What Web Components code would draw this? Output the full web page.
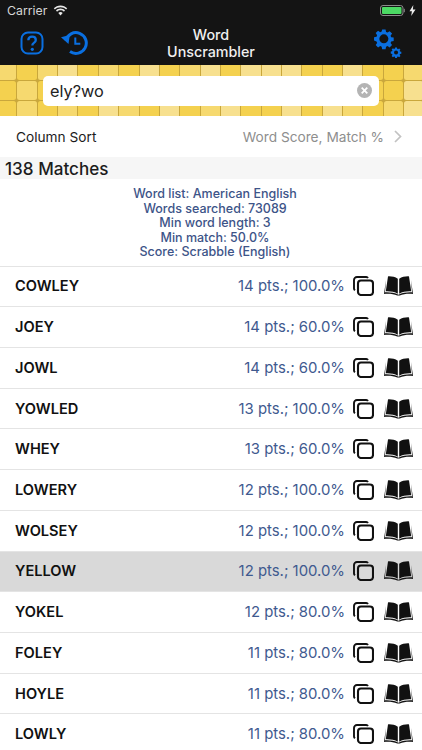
<!DOCTYPE html>
<html>
<head>
<meta charset="utf-8">
<style>
  html, body { margin: 0; padding: 0; background: #fff; }
  body { width: 422px; height: 750px; overflow: hidden; font-family: Inter, "Liberation Sans", sans-serif; }
</style>
</head>
<body>
<app-header></app-header>
<tile-search value="ely?wo"></tile-search>
<sort-row></sort-row>
<match-head>138 Matches</match-head>
<search-info>
  <div>Word list: American English</div>
  <div>Words searched: 73089</div>
  <div>Min word length: 3</div>
  <div>Min match: 50.0%</div>
  <div>Score: Scrabble (English)</div>
</search-info>
<word-row word="COWLEY" score="14 pts.; 100.0%"></word-row>
<word-row word="JOEY" score="14 pts.; 60.0%"></word-row>
<word-row word="JOWL" score="14 pts.; 60.0%"></word-row>
<word-row word="YOWLED" score="13 pts.; 100.0%"></word-row>
<word-row word="WHEY" score="13 pts.; 60.0%"></word-row>
<word-row word="LOWERY" score="12 pts.; 100.0%"></word-row>
<word-row word="WOLSEY" score="12 pts.; 100.0%"></word-row>
<word-row word="YELLOW" score="12 pts.; 100.0%" selected></word-row>
<word-row word="YOKEL" score="12 pts.; 80.0%"></word-row>
<word-row word="FOLEY" score="11 pts.; 80.0%"></word-row>
<word-row word="HOYLE" score="11 pts.; 80.0%"></word-row>
<word-row word="LOWLY" score="11 pts.; 80.0%"></word-row>

<script>
  (function() {
    let define = (name, html) => {
      customElements.define(name, class extends HTMLElement {
        connectedCallback() {
          if (this.shadowRoot) return;
          this.attachShadow({mode: 'open'}).innerHTML = html(this);
        }
      });
    };

    // 8 chunky teeth round a 24x24 box
    const GEAR_PATH = 'M9.800 0h4.400l.6 3.200 1.900.8 2.700-1.900 3.100 3.100-1.900 2.700.8 1.900 3.200.6v4.400l-3.200.6-.8 1.900 1.900 2.700-3.100 3.100-2.700-1.900-1.900.8-.6 3.200H9.800l-.6-3.200-1.900-.8-2.700 1.900-3.100-3.100 1.900-2.700-.8-1.900L-.6 14.200V9.800l3.200-.6.8-1.900-1.900-2.700 3.100-3.100 2.700 1.900 1.900-.8z';

    define('app-header', () => `
      <style>
        :host { display: block; background: #141414; color: #fff; height: 65px; }
        .status { height: 21px; display: flex; align-items: center; padding: 0 6px 0 7px; font-size: 12.300px; color: #d6d6d6; gap: 6px; }
        .status .space { flex: 1; }
        .nav { height: 44px; display: flex; align-items: center; padding-left: 20px; padding-right: 20px; }
        .title { flex: 1; text-align: center; font-size: 14.300px; font-weight: 500; line-height: 17px; padding-right: 40px; color: #f0f0f0; }
        svg { display: block; }
        .icons { display: flex; gap: 17px; align-items: center; width: 68px; }
      </style>
      <div class="status">
        <span>Carrier</span>
        <svg width="15" height="11" viewBox="0 0 15 11"><path d="M7.500 2.200c2.200 0 4.200.9 5.600 2.300l1.100-1.200C12.500 1.500 10.100.4 7.500.4S2.500 1.500.8 3.300l1.100 1.200C3.300 3.100 5.300 2.200 7.500 2.200z" fill="#e8e8e8"/><path d="M7.500 5.300c1.300 0 2.500.5 3.400 1.400l1.100-1.200C10.800 4.300 9.200 3.600 7.500 3.600S4.200 4.300 3 5.500l1.100 1.200C5 5.800 6.200 5.300 7.500 5.300z" fill="#e8e8e8"/><path d="M7.500 10.500 9.700 8.100C9.100 7.500 8.300 7.100 7.500 7.100S5.900 7.500 5.300 8.100z" fill="#e8e8e8"/></svg>
        <span class="space"></span>
        <svg width="25" height="11" viewBox="0 0 25 11"><rect x=".5" y=".5" width="22.500" height="10" rx="2.500" fill="none" stroke="#8b8b8b"/><rect x="2" y="2" width="19.500" height="7" rx="1" fill="#4cd964"/><rect x="23.800" y="3.800" width="1" height="3.400" fill="#8b8b8b"/></svg>
        <svg width="7" height="11" viewBox="0 0 7 11" style="margin-left:-2px"><path d="M4.300 0 .5 6.200h2.400L2.200 11 6.500 4.400H3.900z" fill="#eee"/></svg>
      </div>
      <div class="nav">
        <div class="icons">
          <svg width="24" height="24" viewBox="0 0 24 24"><rect x="1.500" y="1.500" width="21" height="21" rx="6.500" fill="none" stroke="#0a6fe0" stroke-width="2"/><path d="M8.300 9.200c.1-2.200 1.600-3.500 3.800-3.500s3.700 1.300 3.700 3.200c0 1.400-.7 2.200-1.900 3-1.100.7-1.500 1.200-1.500 2.200v.5" fill="none" stroke="#0a6fe0" stroke-width="2.300"/><circle cx="12.300" cy="18.300" r="1.600" fill="#0a6fe0"/></svg>
          <svg width="27" height="26" viewBox="0 0 27 26"><path d="M4.800 10.500A10.400 10.400 0 1 1 9 21.600" fill="none" stroke="#0a6fe0" stroke-width="3"/><path d="M0 7.300 8.800 5.100 7.500 14z" fill="#0a6fe0"/><path d="M14.300 7.500v6.300h5" fill="none" stroke="#0a6fe0" stroke-width="2"/></svg>
        </div>
        <div class="title">Word<br>Unscrambler</div>
        <svg width="28" height="30" viewBox="0 0 28 30" style="margin-top:2px">
          <path transform="translate(.5 .5) scale(.78)" d="${GEAR_PATH}" fill="#0a6fe0"/>
          <circle cx="9.860" cy="9.860" r="4.500" fill="#141414"/>
          <path transform="translate(17 18.500) scale(.42)" d="${GEAR_PATH}" fill="#0a6fe0"/>
          <circle cx="22.040" cy="23.540" r="2" fill="#141414"/>
        </svg>
      </div>
    `);

    // rows of the tile strip: 0 deep, 1 mid, 2 pale
    const TILES = [
      '101201020120222002001',
      '010000000000000000002',
      '010102102012002021012'
    ];

    define('tile-search', (el) => `
      <style>
        :host { display: block; width: 422px; height: 51px; overflow: hidden; background: #c9a73c; }
        .wrap { display: grid; grid-template-columns: 422px; height: 51px; }
        .tiles, .bar { grid-area: 1 / 1; }
        .tiles { display: grid; grid-template-columns: repeat(21, 20.350px); grid-auto-rows: 20.350px; margin: -5.350px 0 0 -3.400px; }
        .tiles i { margin: .5px; background: #f4d14f; border-radius: 2.500px; }
        .tiles i.m1 { background: #f6d96f; }
        .tiles i.m2 { background: #f7e08f; }
        .bar { padding: 11px 43px 0 43px; z-index: 1; }
        .box { height: 29.500px; background: #fff; border-radius: 5px; display: flex; align-items: center; padding: 0 7.500px 0 7px; font-size: 16.300px; color: #222; }
        .box span { flex: 1; }
        svg { display: block; }
      </style>
      <div class="wrap">
        <div class="tiles">${TILES.join('').split('').map((t) => `<i class="m${t}"></i>`).join('')}</div>
        <div class="bar"><div class="box"><span>${el.getAttribute('value')}</span>
          <svg width="15" height="15" viewBox="0 0 15 15"><circle cx="7.500" cy="7.500" r="7.500" fill="#b4b4b4"/><path d="M4.700 4.700l5.600 5.600m0-5.600-5.600 5.600" stroke="#fff" stroke-width="1.800"/></svg>
        </div></div>
      </div>
    `);

    define('sort-row', () => `
      <style>
        :host { display: flex; align-items: center; height: 41px; padding: 0 20px 0 16px; font-size: 13.700px; color: #1c1c1c; }
        span { flex: 1; }
        b { font-weight: 400; color: #8e8e8e; margin-right: 10px; }
        svg { display: block; }
      </style>
      <span>Column Sort</span><b>Word Score, Match %</b>
      <svg width="8" height="13" viewBox="0 0 8 13"><path d="M1 1l5.500 5.500L1 12" fill="none" stroke="#c2c2c2" stroke-width="1.700"/></svg>
    `);

    define('match-head', () => `
      <style>
        :host { display: block; height: 22px; line-height: 24px; background: #f6f6f6; padding-left: 5px; font-size: 17.100px; font-weight: 500; color: #1c1c1c; }
      </style>
      <slot></slot>
    `);

    define('search-info', () => `
      <style>
        :host { display: block; height: 87.500px; padding: 8px 0 0 8px; box-sizing: border-box; border-bottom: 1px solid #e4e4e4; text-align: center; font-size: 12.500px; font-weight: 500; line-height: 14.600px; color: #3d5488; }
      </style>
      <slot></slot>
    `);

    define('word-row', (el) => `
      <style>
        :host { display: flex; align-items: center; height: 40.720px; box-sizing: border-box; padding: 0 9.500px 0 15px; border-bottom: 1px solid #e4e4e4; background: ${el.hasAttribute('selected') ? '#d9d9d9' : '#fff'}; }
        .w { flex: 1; font-size: 14.600px; font-weight: 600; color: #111; }
        .s { font-size: 14.900px; color: #3f5a8f; margin-right: 7.500px; }
        svg { display: block; }
        .copy { margin-right: 10px; }
      </style>
      <span class="w">${el.getAttribute('word')}</span>
      <span class="s">${el.getAttribute('score')}</span>
      <svg class="copy" width="21" height="20" viewBox="0 0 21 20"><path d="M15 2A2 2 0 0 0 13.300 1H4A3 3 0 0 0 1 4v8.500c0 .8.400 1.400 1 1.800" fill="none" stroke="#111" stroke-width="1.900"/><rect x="5" y="4.500" width="15" height="14.500" rx="3" fill="none" stroke="#111" stroke-width="2.100"/></svg>
      <svg width="29" height="20" viewBox="0 0 29 20"><path d="M13.800 2.800C11 .9 7.300.2 4 .4L1.800 15.300c4.200-.2 8.700.4 12 2.500z" fill="#111"/><path d="M15.200 2.800C18 .9 21.700.2 25 .4l2.200 14.900c-4.200-.2-8.700.4-12 2.500z" fill="#111"/><path d="M2 4 0 18c4.800-.5 9.800 0 13.300 1.600h2.400C19.200 18 24.200 17.500 29 18L27 4l1 12.300c-4.800-.2-9.800.4-13.500 2.500C10.800 16.700 5.800 16.100 1 16.300z" fill="#111"/></svg>
    `);
  })();
</script>
</body>
</html>
